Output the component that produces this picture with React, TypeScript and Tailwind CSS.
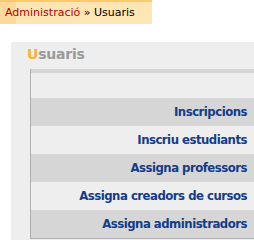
import React from 'react';

const links = [
  'Inscripcions',
  'Inscriu estudiants',
  'Assigna professors',
  'Assigna creadors de cursos',
  'Assigna administradors',
];

export default function App() {
  return (
    <div className="w-[254px] h-[240px] overflow-hidden bg-white font-['DejaVu_Sans',sans-serif]">
      {/* breadcrumb */}
      <div className="w-[152px] h-[24px] border-t-2 border-[#fcc96c] bg-[linear-gradient(to_right,#fdd99c_16px,#fee6b4_16px)] pl-[5px] text-[11px] leading-[21px]">
        <a href="#" className="text-[#b40000]">Administració</a>
        <span className="text-black"> » Usuaris</span>
      </div>

      <div className="ml-[11px] mt-[18px] h-[300px] bg-[#eeeeee] pt-[3px]">
        <h2 className="pl-[16px] text-[14px] font-bold leading-[18px] text-[#9a9a9a] tracking-[-0.2px]">
          <span className="text-[#fbb034]">U</span>suaris
        </h2>

        <div className="ml-[19px] mt-[6px] border-l border-b border-[#b0b0b0]">
          <div className="h-[4px] bg-[#d6d6d6]" />
          <div className="h-[25px] bg-[#eeeeee]" />
          {links.map((label, i) => (
            <div
              key={label}
              className={`flex h-[28px] items-center justify-end pr-[7px] ${
                i % 2 === 0 ? 'bg-[#d6d6d6]' : 'bg-[#eeeeee]'
              }`}
            >
              <a
                href="#"
                className="font-['DejaVu_Sans_Condensed','DejaVu_Sans',sans-serif] text-[13px] font-bold tracking-[-0.5px] text-[#123c8c]"
              >
                {label}
              </a>
            </div>
          ))}
        </div>
      </div>
    </div>
  );
}
